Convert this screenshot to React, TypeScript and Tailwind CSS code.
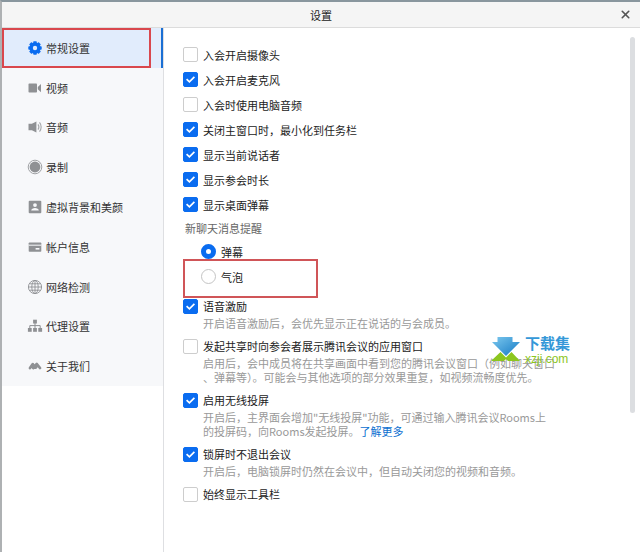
import { X } from "lucide-react";
import type { ReactNode } from "react";

const navItems = [
  {
    label: "常规设置",
    icon: (
      <svg viewBox="0 0 16 16" className="size-4">
        <g fill="#0a6cf0">
          <circle cx="8" cy="8" r="5.5" />
          {[0, 45, 90, 135, 180, 225, 270, 315].map((deg) => (
            <rect key={deg} x="6.2" y="1.3" width="3.6" height="4" rx="0.8" transform={`rotate(${deg} 8 8)`} />
          ))}
        </g>
        <circle cx="8" cy="8" r="2.2" fill="#e1ecfc" />
      </svg>
    ),
  },
  {
    label: "视频",
    icon: (
      <svg viewBox="0 0 16 16" className="size-4" fill="#8f9194">
        <rect x="1.5" y="3.6" width="8.5" height="9" rx="0.8" />
        <path d="M10.8 7 14 4v8.2l-3.2-3z" />
      </svg>
    ),
  },
  {
    label: "音频",
    icon: (
      <svg viewBox="0 0 16 16" className="size-4">
        <path d="M1.5 4.8h3.400L9.400 2.400v11.200l-4.500-2.400H1.500z" fill="#8f9194" />
        <path d="M11 5.400c1 1.400 1 3.800 0 5.200M12.500 3.400c2.200 2.400 2.200 6.800 0 9.200" fill="none" stroke="#a5a7aa" strokeWidth="1.1" />
      </svg>
    ),
  },
  {
    label: "录制",
    icon: (
      <svg viewBox="0 0 16 16" className="size-4">
        <circle cx="8" cy="8" r="6.8" fill="none" stroke="#a0a2a5" strokeWidth="1" />
        <circle cx="8" cy="8" r="5.4" fill="#8f9194" />
      </svg>
    ),
  },
  {
    label: "虚拟背景和美颜",
    icon: (
      <svg viewBox="0 0 16 16" className="size-4">
        <rect x="1.7" y="1.7" width="12.6" height="12.6" rx="1" fill="#8f9194" />
        <circle cx="8" cy="6.1" r="1.9" fill="#f7f8fa" />
        <path d="M4.2 11.600c0-3.400 7.600-3.400 7.600 0z" fill="#f7f8fa" />
      </svg>
    ),
  },
  {
    label: "帐户信息",
    icon: (
      <svg viewBox="0 0 16 16" className="size-4">
        <rect x="1.7" y="3.4" width="12.6" height="9.4" rx="0.8" fill="#8f9194" />
        <path d="M1.7 6.200h12.600" stroke="#f7f8fa" strokeWidth="1" />
        <rect x="8.6" y="9" width="3.8" height="1.6" fill="#f7f8fa" />
      </svg>
    ),
  },
  {
    label: "网络检测",
    icon: (
      <svg viewBox="0 0 16 16" className="size-4" fill="none" stroke="#8f9194" strokeWidth="0.9">
        <circle cx="8" cy="8" r="6.6" />
        <ellipse cx="8" cy="8" rx="3.2" ry="6.6" />
        <path d="M8 1.400v13.200M2.500 4.800h11M1.400 8h13.200M2.500 11.200h11" />
      </svg>
    ),
  },
  {
    label: "代理设置",
    icon: (
      <svg viewBox="0 0 16 16" className="size-4">
        <path d="M8 5v5M2.800 10.500V7.600h10.400v2.900" fill="none" stroke="#8f9194" strokeWidth="1" />
        <g fill="#8f9194">
          <rect x="6.1" y="1.7" width="3.8" height="3.8" />
          <rect x="0.9" y="10" width="3.8" height="3.8" />
          <rect x="6.1" y="10" width="3.8" height="3.8" />
          <rect x="11.3" y="10" width="3.8" height="3.8" />
        </g>
      </svg>
    ),
  },
  {
    label: "关于我们",
    icon: (
      <svg viewBox="0 0 16 16" className="size-4">
        <path
          d="M3 10 5.800 6.200 8 9.600M6.200 10 9.800 6 13 10M8.800 9.600l1-1.600"
          fill="none"
          stroke="#8f9194"
          strokeWidth="2.8"
          strokeLinecap="round"
          strokeLinejoin="round"
        />
      </svg>
    ),
  },
];

const basicOptions = [
  { label: "入会开启摄像头", checked: false },
  { label: "入会开启麦克风", checked: true },
  { label: "入会时使用电脑音频", checked: false },
  { label: "关闭主窗口时，最小化到任务栏", checked: true },
  { label: "显示当前说话者", checked: true },
  { label: "显示参会时长", checked: true },
  { label: "显示桌面弹幕", checked: true },
];

const detailedOptions: { label: string; checked: boolean; description?: ReactNode }[] = [
  {
    label: "语音激励",
    checked: true,
    description: "开启语音激励后，会优先显示正在说话的与会成员。",
  },
  {
    label: "发起共享时向参会者展示腾讯会议的应用窗口",
    checked: false,
    description: (
      <>
        启用后，会中成员将在共享画面中看到您的腾讯会议窗口（例如聊天窗口
        <br />
        、弹幕等）。可能会与其他选项的部分效果重复，如视频流畅度优先。
      </>
    ),
  },
  {
    label: "启用无线投屏",
    checked: true,
    description: (
      <>
        开启后，主界面会增加"无线投屏"功能，可通过输入腾讯会议Rooms上
        <br />
        的投屏码，向Rooms发起投屏。
        <a href="#more" className="text-[#0b6fd0]">
          了解更多
        </a>
      </>
    ),
  },
  {
    label: "锁屏时不退出会议",
    checked: true,
    description: "开启后，电脑锁屏时仍然在会议中，但自动关闭您的视频和音频。",
  },
  { label: "始终显示工具栏", checked: false },
];

function Checkbox({ label, checked }: { label: string; checked: boolean }) {
  return (
    <label className="flex items-center gap-[5px] text-[#222]">
      <span className="grid size-[15px] shrink-0">
        <input
          type="checkbox"
          defaultChecked={checked}
          className="peer col-start-1 row-start-1 size-[15px] appearance-none rounded-xs border border-[#cdcdcd] bg-white checked:border-[#0a6cf0] checked:bg-[#0a6cf0]"
        />
        <svg
          viewBox="0 0 15 15"
          className="pointer-events-none invisible col-start-1 row-start-1 size-[15px] peer-checked:visible"
          fill="none"
          stroke="#fff"
          strokeWidth="1.7"
        >
          <path d="m3.600 7.200 2.800 2.700 5-5" />
        </svg>
      </span>
      {label}
    </label>
  );
}

function Radio({ label, checked }: { label: string; checked?: boolean }) {
  return (
    <label className="flex h-[25px] items-center gap-[5px] text-[#222]">
      <input
        type="radio"
        name="chat-reminder"
        defaultChecked={checked}
        className="size-[15px] shrink-0 appearance-none rounded-full border border-[#c4c4c4] bg-white checked:border-5 checked:border-[#0a6cf0]"
      />
      {label}
    </label>
  );
}

function Watermark() {
  return (
    <div className="pointer-events-none absolute top-[306px] left-[327px] flex gap-1">
      <svg viewBox="0 0 30 26" className="mt-[2px] h-[26px] w-[30px]">
        <defs>
          <linearGradient id="arrow" x1="0" y1="0" x2="1" y2="1">
            <stop offset="0" stopColor="#7cc8ee" />
            <stop offset="1" stopColor="#1479c4" />
          </linearGradient>
        </defs>
        <path d="M0 25 9.500 16 15 21.500 20.500 16 29 25H17l-2-2-2 2z" fill="#8cc61f" />
        <path d="M6.500 1h15v5H29L15 20 1 6h5.500z" fill="url(#arrow)" />
      </svg>
      <div>
        <div className="text-[15px] leading-[18px] font-bold text-[#3498d8]">下载集</div>
        <div className="font-['Liberation_Sans',sans-serif] text-[12px] leading-[14px] text-[#8cc61f]">xzji.com</div>
      </div>
    </div>
  );
}

export default function App() {
  return (
    <div className="flex min-h-screen flex-col border-t-2 border-l-2 border-t-[#89969e] border-l-[#aeb1b3] bg-white font-['Noto_Sans_CJK_SC',sans-serif] text-[11px] leading-[14px]">
      {/* Title bar */}
      <header className="grid h-[26px] grid-cols-[1fr_auto_1fr] items-center border-b border-[#dcdcdc] bg-[#f5f5f5]">
        <h1 className="col-start-2 text-[11px] text-[#222]">设置</h1>
        <button type="button" aria-label="关闭" className="justify-self-end pr-2 text-[#555]">
          <X className="size-[13px]" strokeWidth={3} />
        </button>
      </header>

      <div className="flex flex-1">
        {/* Sidebar */}
        <aside className="w-[162px] shrink-0 border-r border-[#dedfe2]">
          <nav className="grid h-[358px] auto-rows-fr bg-[#f7f8fa]">
            {navItems.map((item, index) => (
              <button
                key={item.label}
                type="button"
                className={
                  index === 0
                    ? "relative flex items-center gap-[3px] border-r-2 border-[#1a6fd4] bg-[#e1ecfc] pl-[25px] text-[#333]"
                    : "flex items-center gap-[3px] pl-[25px] text-[#333]"
                }
              >
                {item.icon}
                {item.label}
                {index === 0 && (
                  <span className="pointer-events-none absolute inset-y-0 right-[10px] left-0 border-2 border-[#d9474d]" />
                )}
              </button>
            ))}
          </nav>
        </aside>

        {/* Settings */}
        <main className="relative flex min-w-0 flex-1 justify-between pt-[9px] pr-[5px] pl-[19px]">
          <div className="pt-[5px]">
            {basicOptions.map((option) => (
              <div key={option.label} className="flex h-[25px] items-center">
                <Checkbox {...option} />
              </div>
            ))}

            <fieldset>
              <legend className="h-[22px] pl-[2px] leading-[22px] text-[#666]">新聊天消息提醒</legend>
              <div className="pl-[18px]">
                <Radio label="弹幕" checked />
                <div className="relative">
                  <Radio label="气泡" />
                  <span className="pointer-events-none absolute -top-[5px] -left-[18px] h-[39px] w-[135px] border-2 border-[#d05558]" />
                </div>
              </div>
            </fieldset>

            <div className="flex flex-col gap-[6px] pt-[7px] pb-6">
              {detailedOptions.map((option) => (
                <section key={option.label}>
                  <div className="flex h-5 items-center">
                    <Checkbox label={option.label} checked={option.checked} />
                  </div>
                  {option.description && <p className="pl-5 text-[#999]">{option.description}</p>}
                </section>
              ))}
            </div>
          </div>

          {/* Scrollbar thumb */}
          <div className="h-[376px] w-[5px] shrink-0 rounded-full bg-[#dcdee1]" />
          <Watermark />
        </main>
      </div>
    </div>
  );
}
